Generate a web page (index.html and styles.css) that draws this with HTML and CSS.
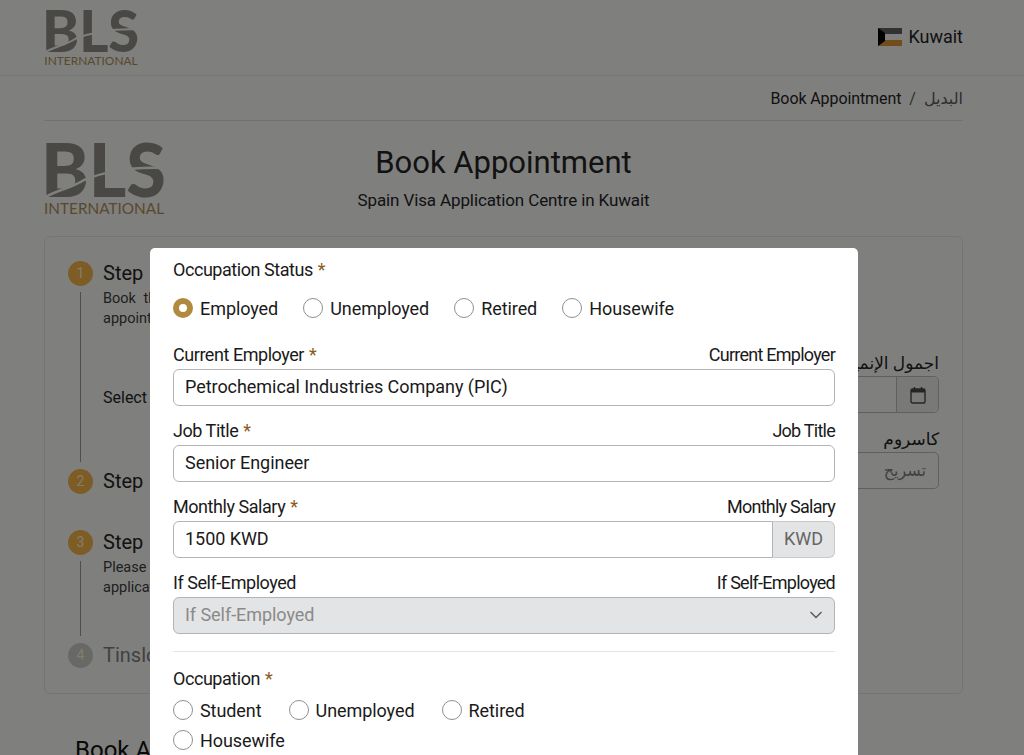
FILE: index.html
```html
<!DOCTYPE html>
<html lang="en">
<head>
    <meta charset="UTF-8">
    <title>Book Appointment</title>
    <link rel="stylesheet" href="styles.css">
</head>
<body>
    <header class="topbar">
        <svg class="logo logo-small" viewBox="0 0 120 72" aria-label="BLS International">
            <text class="logo-bls" x="-3" y="54" textLength="125" lengthAdjust="spacingAndGlyphs">BLS</text>
            <path class="logo-cut" d="M-2 56 C14 46 26 46 40 37 C58 30 82 23 122 25"/>
            <text class="logo-intl" x="0" y="71" textLength="120" lengthAdjust="spacingAndGlyphs">INTERNATIONAL</text>
        </svg>
        <div class="country">
            <svg class="flag" viewBox="0 0 24 18">
                <rect width="24" height="6" fill="#5c5c5c"/>
                <rect y="6" width="24" height="6" fill="#e6e6e6"/>
                <rect y="12" width="24" height="6" fill="#d08a30"/>
                <path d="M0 0 L7 5 V13 L0 18 Z" fill="#000"/>
            </svg>
            <span>Kuwait</span>
        </div>
    </header>

    <nav class="crumbs">
        <div class="crumbs-inner">
            <span class="crumbs-page">Book Appointment</span>
            <span class="crumbs-sep">/</span>
            <span class="crumbs-ar">البديل</span>
        </div>
    </nav>

    <main class="container">
        <div class="head">
            <svg class="logo logo-big" viewBox="0 0 120 72" aria-label="BLS International">
                <text class="logo-bls" x="-3" y="54" textLength="125" lengthAdjust="spacingAndGlyphs">BLS</text>
                <path class="logo-cut" d="M-2 56 C14 46 26 46 40 37 C58 30 82 23 122 25"/>
                <text class="logo-intl" x="0" y="71" textLength="120" lengthAdjust="spacingAndGlyphs">INTERNATIONAL</text>
            </svg>
            <div class="head-text">
                <h1>Book Appointment</h1>
                <p>Spain Visa Application Centre in Kuwait</p>
            </div>
        </div>

        <section class="card">
            <ol class="steps">
                <li class="step step-one">
                    <div class="step-mark"><span class="step-num">1</span><span class="step-line"></span></div>
                    <div class="step-body">
                        <h3>Step 1</h3>
                        <p>Book the<br>appointment</p>
                        <p class="step-select">Select date</p>
                    </div>
                </li>
                <li class="step step-two">
                    <div class="step-mark"><span class="step-num">2</span></div>
                    <div class="step-body"><h3>Step 2</h3></div>
                </li>
                <li class="step step-three">
                    <div class="step-mark"><span class="step-num">3</span><span class="step-line"></span></div>
                    <div class="step-body">
                        <h3>Step 3</h3>
                        <p>Please fill the<br>application</p>
                    </div>
                </li>
                <li class="step step-off">
                    <div class="step-mark"><span class="step-num">4</span></div>
                    <div class="step-body"><h3>Tinslot</h3></div>
                </li>
            </ol>
            <div class="side-form">
                <label class="side-label">اجمول الإنميد</label>
                <div class="side-input">
                    <span class="side-addon">
                        <svg viewBox="0 0 16 18" width="16" height="18">
                            <rect x="1" y="3" width="14" height="14" rx="1.5" fill="none" stroke="#444" stroke-width="1.4"/>
                            <rect x="1" y="3" width="14" height="3.5" fill="#444"/>
                            <path d="M4.5 1v3M11.5 1v3" stroke="#444" stroke-width="1.4"/>
                        </svg>
                    </span>
                </div>
                <label class="side-label">كاسروم</label>
                <div class="side-input side-text">تسريح</div>
            </div>
        </section>

        <h2 class="below">Book Appointment</h2>
    </main>

    <div class="overlay"></div>

    <div class="modal">
        <div class="label-row"><span>Occupation Status <b>*</b></span></div>
        <div class="radios radios-status">
            <label class="radio checked"><i></i>Employed</label>
            <label class="radio"><i></i>Unemployed</label>
            <label class="radio"><i></i>Retired</label>
            <label class="radio"><i></i>Housewife</label>
        </div>

        <div class="label-row"><span>Current Employer <b>*</b></span><span>Current Employer</span></div>
        <div class="field">Petrochemical Industries Company (PIC)</div>

        <div class="label-row"><span>Job Title <b>*</b></span><span>Job Title</span></div>
        <div class="field">Senior Engineer</div>

        <div class="label-row"><span>Monthly Salary <b>*</b></span><span>Monthly Salary</span></div>
        <div class="field-group">
            <div class="field">1500 KWD</div>
            <span class="addon">KWD</span>
        </div>

        <div class="label-row"><span>If Self-Employed</span><span>If Self-Employed</span></div>
        <div class="field field-select">
            If Self-Employed
            <svg viewBox="0 0 14 8" width="14" height="8"><path d="M1.5 1 L7 6.5 L12.5 1" fill="none" stroke="#555" stroke-width="1.3"/></svg>
        </div>

        <hr>

        <div class="label-row"><span>Occupation <b>*</b></span></div>
        <div class="radios radios-occ">
            <label class="radio"><i></i>Student</label>
            <label class="radio"><i></i>Unemployed</label>
            <label class="radio"><i></i>Retired</label>
            <label class="radio"><i></i>Housewife</label>
        </div>
    </div>
</body>
</html>
```

FILE: styles.css
```css
:root {
    --page: #e8e8e6;
    --gold: #b08a3e;
    --line: #b4b4b4;
    --grey-fill: #e3e4e5;
}

* {
    box-sizing: border-box;
}

body {
    margin: 0;
    height: 100vh;
    overflow: hidden;
    background: var(--page);
    font-family: Roboto, "DejaVu Sans", sans-serif;
    color: #222;
}

.logo {
    display: block;
    overflow: visible;
}

.logo-small {
    width: 94px;
    height: 56px;
}

.logo-big {
    width: 120px;
    height: 72px;
}

.logo-bls {
    font-family: Lato, sans-serif;
    font-weight: 900;
    font-size: 74px;
    fill: #85847f;
}

.logo-cut {
    fill: none;
    stroke: var(--page);
    stroke-width: 2.5;
}

.logo-intl {
    font-family: Lato, sans-serif;
    font-size: 15px;
    fill: #a08650;
}

.topbar {
    height: 76px;
    padding: 10px 61px 0 44px;
    display: flex;
    justify-content: space-between;
    border-bottom: 1px solid #d8d8d6;
}

.country {
    display: flex;
    align-items: center;
    gap: 6px;
    height: 53px;
    font-size: 18px;
}

.flag {
    width: 24px;
    height: 18px;
    margin-left: 1px;
}

.crumbs {
    padding: 0 61px 0 44px;
}

.crumbs-inner {
    height: 45px;
    display: flex;
    justify-content: flex-end;
    align-items: center;
    gap: 8px;
    font-size: 16px;
    border-bottom: 1px solid #d0d0ce;
}

.crumbs-page {
    letter-spacing: -0.1px;
}

.crumbs-sep,
.crumbs-ar {
    color: #555;
}

.container {
    padding: 0 61px 0 44px;
}

.head {
    height: 115px;
    padding-top: 22px;
    display: grid;
    grid-template-columns: 120px 1fr 120px;
}

.head-text {
    margin-top: -1px;
    text-align: center;
}

.head h1 {
    margin: 0;
    font-size: 31px;
    font-weight: 400;
    line-height: 42px;
}

.head p {
    margin: 5px 0 0;
    font-size: 17px;
    line-height: 22px;
    letter-spacing: -0.12px;
}

.card {
    height: 458px;
    padding: 24px 23px 0 23px;
    display: flex;
    justify-content: space-between;
    border: 1px solid #d4d4d2;
    border-radius: 6px;
}

.steps {
    list-style: none;
    margin: 0;
    padding: 0;
}

.step {
    display: flex;
    gap: 10px;
}

.step-one { height: 208px; }
.step-two { height: 61px; }
.step-three { height: 113px; }

.step-mark {
    width: 25px;
    display: flex;
    flex-direction: column;
    align-items: center;
}

.step-num {
    width: 25px;
    height: 25px;
    flex: none;
    border-radius: 50%;
    background: #e4a846;
    color: #f4e2c0;
    font-size: 14px;
    line-height: 25px;
    text-align: center;
}

.step-line {
    flex: 1;
    width: 1px;
    margin: 6px 0 7px;
    background: #8e8e8e;
}

.step-body h3 {
    margin: 0;
    font-size: 20px;
    font-weight: 400;
    line-height: 25px;
    word-spacing: 4px;
}

.step-body p {
    margin: 3px 0 0;
    font-size: 14.5px;
    line-height: 20px;
    word-spacing: 4px;
    color: #3a3a3a;
}

.step-body .step-select {
    margin-top: 59px;
    font-size: 16px;
    color: #222;
}

.step-off .step-num {
    background: #bdbdbb;
}

.step-off h3 {
    color: #777;
}

.side-form {
    width: 340px;
    padding-top: 90px;
    text-align: right;
}

.side-label {
    display: block;
    font-size: 17px;
    line-height: 25px;
}

.side-input {
    height: 37px;
    margin-bottom: 14px;
    display: flex;
    justify-content: flex-end;
    border: 1px solid #b0b0ae;
    border-radius: 5px;
}

.side-text {
    align-items: center;
    padding-right: 12px;
    font-size: 16px;
    color: #777;
}

.side-addon {
    width: 42px;
    display: flex;
    align-items: center;
    justify-content: center;
    background: #dcdcda;
    border-left: 1px solid #b0b0ae;
    border-radius: 0 4px 4px 0;
}

.below {
    margin: 42px 0 0 31px;
    font-size: 24px;
    font-weight: 400;
    color: #111;
}

.overlay {
    position: fixed;
    inset: 0;
    background: rgba(0, 0, 0, 0.45);
}

.modal {
    position: absolute;
    top: 248px;
    bottom: 0;
    left: 150px;
    width: 708px;
    padding: 10px 23px 0;
    overflow: hidden;
    background: #fff;
    border-radius: 5px 5px 0 0;
    color: #1a1a1a;
    font-size: 18px;
}

.label-row {
    display: flex;
    justify-content: space-between;
    height: 26px;
    line-height: 24px;
}

.label-row span {
    letter-spacing: -0.45px;
}

.label-row span + span {
    letter-spacing: -0.75px;
}

.label-row b {
    margin-left: 1px;
    font-weight: 400;
    color: #8a5a1e;
}

.radios {
    display: flex;
    flex-wrap: wrap;
    align-items: center;
}

.radios-status {
    margin: 9px 0 20px;
    gap: 0 25px;
}

.radios-occ {
    margin-top: 2px;
    gap: 0 27px;
    width: 440px;
}

.radio {
    display: flex;
    align-items: center;
    gap: 7px;
    height: 30px;
    letter-spacing: -0.07px;
}

.radio i {
    width: 20px;
    height: 20px;
    flex: none;
    border: 1px solid #8f8f8f;
    border-radius: 50%;
    background: #fff;
}

.radio.checked i {
    border: 6.5px solid var(--gold);
}

.field {
    height: 37px;
    margin-bottom: 13px;
    padding: 0 11px 2px;
    display: flex;
    align-items: center;
    border: 1px solid var(--line);
    border-radius: 6px;
    letter-spacing: -0.05px;
}

.field-group {
    display: flex;
    height: 37px;
    margin-bottom: 13px;
}

.field-group .field {
    flex: 1;
    margin: 0;
    border-radius: 6px 0 0 6px;
}

.addon {
    width: 62px;
    display: flex;
    align-items: center;
    justify-content: center;
    padding-bottom: 2px;
    background: var(--grey-fill);
    border: 1px solid #c9c9c9;
    border-left: 0;
    border-radius: 0 6px 6px 0;
    color: #666;
}

.field-select {
    justify-content: space-between;
    margin-bottom: 17px;
    background: var(--grey-fill);
    color: #8a8a8a;
}

.modal hr {
    margin: 0 0 15px;
    border: 0;
    border-top: 1px solid #e2e2e2;
}
```
